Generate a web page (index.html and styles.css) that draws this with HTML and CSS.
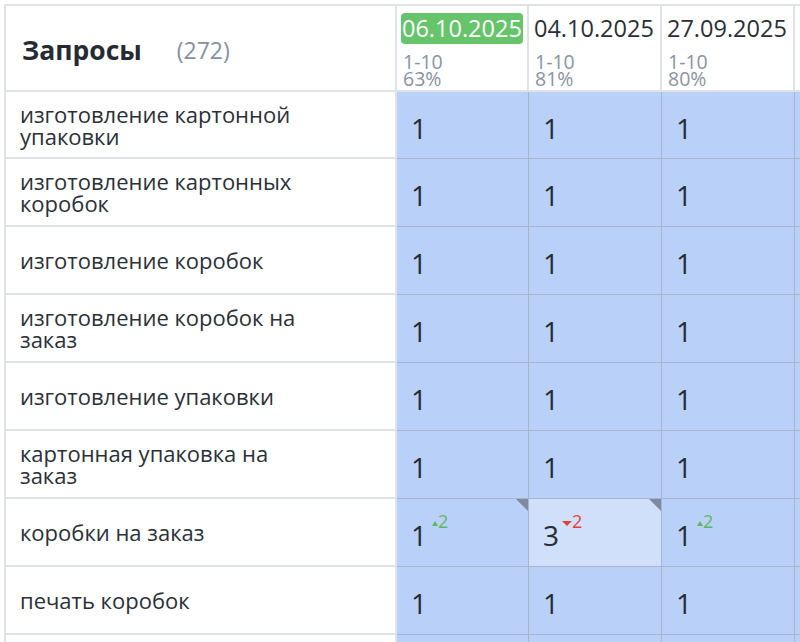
FILE: index.html
```html
<!DOCTYPE html>
<html lang="ru">
<head>
<meta charset="utf-8">
<link rel="stylesheet" href="styles.css">
</head>
<body>
<div class="wrap">
  <div class="grid">
    <div class="hcell title"><span class="t-main">Запросы</span><span class="t-count">(272)</span></div>
    <div class="hcell date"><span class="d d-active">06.10.2025</span><span class="meta">1-10</span><span class="meta">63%</span></div>
    <div class="hcell date"><span class="d">04.10.2025</span><span class="meta">1-10</span><span class="meta">81%</span></div>
    <div class="hcell date"><span class="d">27.09.2025</span><span class="meta">1-10</span><span class="meta">80%</span></div>
    <div class="hcell date"></div>

    <div class="q">изготовление картонной упаковки</div>
    <div class="c">1</div><div class="c">1</div><div class="c">1</div><div class="c"></div>

    <div class="q">изготовление картонных коробок</div>
    <div class="c">1</div><div class="c">1</div><div class="c">1</div><div class="c"></div>

    <div class="q">изготовление коробок</div>
    <div class="c">1</div><div class="c">1</div><div class="c">1</div><div class="c"></div>

    <div class="q">изготовление коробок на заказ</div>
    <div class="c">1</div><div class="c">1</div><div class="c">1</div><div class="c"></div>

    <div class="q">изготовление упаковки</div>
    <div class="c">1</div><div class="c">1</div><div class="c">1</div><div class="c"></div>

    <div class="q">картонная упаковка на заказ</div>
    <div class="c">1</div><div class="c">1</div><div class="c">1</div><div class="c"></div>

    <div class="q">коробки на заказ</div>
    <div class="c flag">1<span class="delta up"><span class="tri"></span>2</span></div>
    <div class="c flag light">3<span class="delta down"><span class="tri"></span>2</span></div>
    <div class="c">1<span class="delta up"><span class="tri"></span>2</span></div>
    <div class="c"></div>

    <div class="q">печать коробок</div>
    <div class="c">1</div><div class="c">1</div><div class="c">1</div><div class="c"></div>

    <div class="q"></div>
    <div class="c"></div><div class="c"></div><div class="c"></div><div class="c"></div>
  </div>
</div>
</body>
</html>
```

FILE: styles.css
```css
html, body {
  margin: 0;
  padding: 0;
  background: #ffffff;
}
body {
  font-family: "Open Sans", "Noto Sans", sans-serif;
  color: #2a2f37;
}
.wrap {
  width: 800px;
  height: 642px;
  overflow: hidden;
  padding: 4px 0 0 4px;
  box-sizing: border-box;
}
.grid {
  display: grid;
  grid-template-columns: 393px 132px 133px 133px 133px;
  grid-template-rows: 88px 67px repeat(8, 68px);
  width: 924px;
}
.grid > div {
  box-sizing: border-box;
}
.hcell {
  background: #fff;
  border-top: 2px solid #dfe2e7;
  border-bottom: 2px solid #dfe2e7;
  border-right: 2px solid #dfe2e7;
}
.title {
  border-left: 2px solid #dfe2e7;
  display: flex;
  align-items: center;
  padding: 3px 0 0 16px;
}
.t-main {
  font-weight: 700;
  font-size: 26.5px;
  color: #262b33;
}
.t-count {
  margin-left: 35px;
  font-size: 23px;
  color: #8690a3;
}
.date {
  display: flex;
  flex-direction: column;
  align-items: flex-start;
  padding: 7px 0 0 4px;
}
.d {
  font-size: 23.5px;
  line-height: 31px;
  padding: 0 1px;
  border-radius: 4px;
  color: #2a2f37;
}
.d-active {
  background: #66c56b;
  color: #ffffff;
}
.meta {
  font-size: 19.5px;
  line-height: 17px;
  color: #8a93a3;
  padding-left: 2px;
}
.d + .meta {
  margin-top: 9px;
}
.q {
  border-left: 2px solid #dfe2e7;
  border-right: 2px solid #dfe2e7;
  border-bottom: 2px solid #dfe2e7;
  padding: 0 75px 0 14px;
  display: flex;
  align-items: center;
  font-size: 22px;
  line-height: 22px;
  color: #2b3038;
  background: #fff;
}
.c {
  position: relative;
  background: #b9d0f9;
  border-right: 1px solid #a7b4ca;
  border-bottom: 1px solid #a7b4ca;
  padding: 17px 0 0 14px;
  font-size: 28px;
  line-height: 38px;
  color: #272c33;
}
.c.light {
  background: #d1e0fa;
}
.c.flag::after {
  content: "";
  position: absolute;
  top: 0;
  right: 0;
  width: 0;
  height: 0;
  border-top: 12px solid #7d8aa2;
  border-left: 12px solid transparent;
}
.delta {
  position: relative;
  top: -18px;
  margin-left: 5px;
  font-size: 18px;
  line-height: 16px;
}
.delta.up { color: #5cb85f; }
.delta.down { color: #e2423d; }
.tri {
  display: inline-block;
  width: 0;
  height: 0;
  margin-right: 0;
  vertical-align: 2px;
}
.up .tri {
  border-left: 3px solid transparent;
  border-right: 3px solid transparent;
  border-bottom: 5px solid #5cb85f;
}
.down .tri {
  border-left: 5px solid transparent;
  border-right: 5px solid transparent;
  border-top: 5px solid #e2423d;
  margin-left: -2px;
}
```
